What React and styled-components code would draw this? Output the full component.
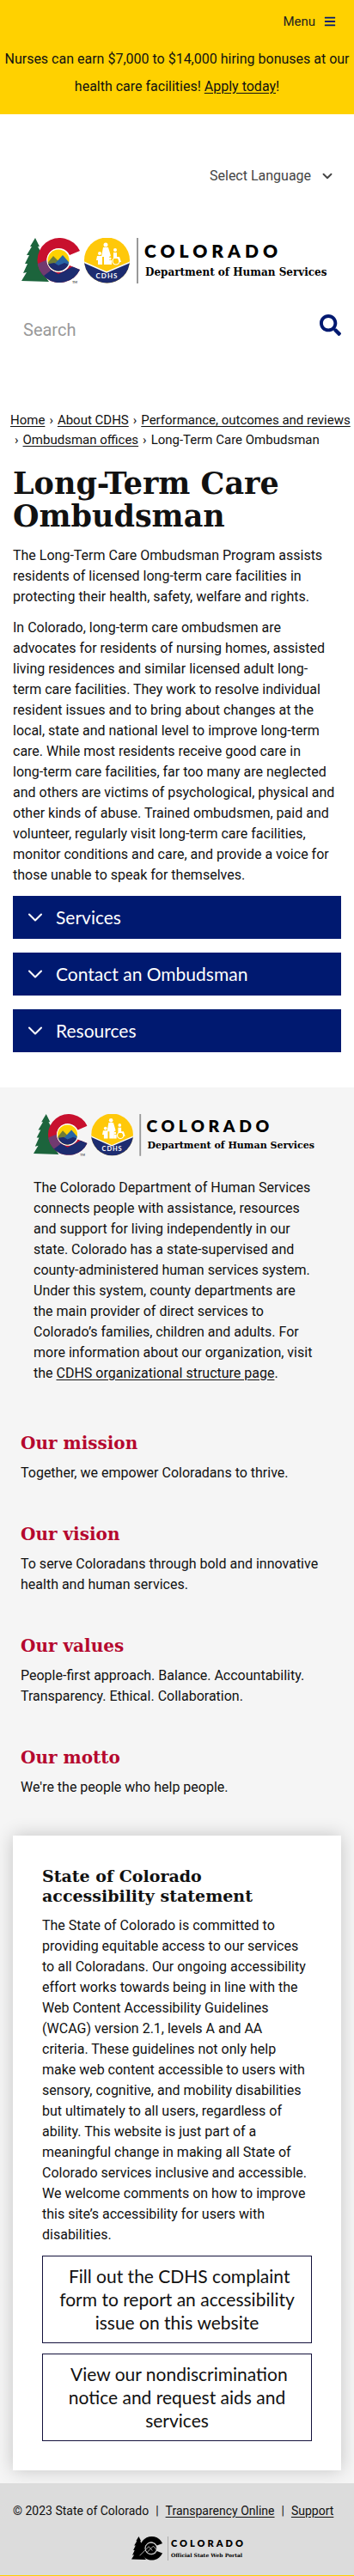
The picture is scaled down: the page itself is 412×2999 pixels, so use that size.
import React from 'react';
import styled, { createGlobalStyle } from 'styled-components';
import { FaBars, FaSearch } from 'react-icons/fa';
import { ChevronDown } from 'lucide-react';

const navy = '#001970';
const slab = '"DejaVu Serif", serif';

const GlobalStyle = createGlobalStyle`
  * { box-sizing: border-box; }
  body {
    margin: 0;
    background: #fff;
    color: #111;
    font: 16px/24px Roboto, "Liberation Sans", sans-serif;
  }
  h1, h2, p { margin: 0; }
  a { color: inherit; text-underline-offset: 2px; }
`;

const TopBar = styled.div`
  display: flex;
  flex-direction: column;
  background: #ffd100;
  padding: 13px 0 16px;
  gap: 16px;
`;

const MenuButton = styled.button`
  display: flex;
  align-items: center;
  gap: 10px;
  align-self: flex-end;
  margin-right: 21px;
  padding: 0;
  border: 0;
  background: none;
  color: ${navy};
  font: 15px/24px Roboto, sans-serif;
  span { color: #222; }
`;

const Notice = styled.p`
  text-align: center;
  line-height: 32px;
`;

const Header = styled.header`
  display: flex;
  flex-direction: column;
  padding: 60px 15px 0;
`;

const LanguagePicker = styled.label`
  display: flex;
  align-items: center;
  align-self: flex-end;
  gap: 9px;
  margin-right: 7px;
  color: #444;
`;

const LanguageSelect = styled.select`
  appearance: none;
  border: 0;
  padding: 0;
  background: none;
  color: inherit;
  font: 16px/24px Roboto, sans-serif;
`;

const HeaderLogo = styled.a`
  display: block;
  margin: 60px 9px 0 10px;
`;

const LogoSvg = styled.svg`
  display: block;
  width: 100%;
  height: auto;
`;

const SearchForm = styled.form`
  display: flex;
  align-items: flex-start;
  margin-top: 36px;
`;

const SearchInput = styled.input`
  flex: 1;
  min-width: 0;
  height: 36px;
  padding: 0 12px;
  border: 0;
  background: none;
  font: 20px/36px Roboto, sans-serif;
  &::placeholder { color: #999; opacity: 1; }
`;

const SearchButton = styled.button`
  display: flex;
  padding: 0;
  border: 0;
  background: none;
  color: ${navy};
`;

const Breadcrumbs = styled.nav`
  display: flex;
  flex-wrap: wrap;
  padding: 76px 0 0 12px;
  font-size: 15px;
  line-height: 23px;
`;

const Crumb = styled.span`
  white-space: nowrap;
  &:not(:first-child)::before { content: "›"; margin: 0 5px; }
`;

const Main = styled.main`
  display: flex;
  flex-direction: column;
  padding: 20px 15px 41px;
`;

const PageTitle = styled.h1`
  font: bold 35px/38px ${slab};
  margin-bottom: 15px;
`;

const Paragraph = styled.p`
  margin-bottom: 12px;
`;

const Accordion = styled.div`
  display: flex;
  flex-direction: column;
  gap: 16px;
`;

const AccordionButton = styled.button`
  display: flex;
  align-items: center;
  gap: 10px;
  height: 50px;
  padding: 0 12px;
  border: 0;
  background: ${navy};
  color: #fff;
  font: 21px/28px Lato, sans-serif;
  text-align: left;
`;

const About = styled.section`
  background: #f5f5f5;
  padding: 31px 15px 15px;
`;

const AboutIntro = styled.div`
  display: flex;
  flex-direction: column;
  gap: 25px;
  padding: 0 24px;
`;

const Statements = styled.div`
  display: flex;
  flex-direction: column;
  gap: 47px;
  padding: 57px 9px 44px;
`;

const Statement = styled.section`
  display: flex;
  flex-direction: column;
  gap: 11px;
`;

const StatementTitle = styled.h2`
  color: #b5082e;
  font: bold 20px/24px ${slab};
`;

const Card = styled.section`
  display: flex;
  flex-direction: column;
  background: #fff;
  padding: 36px 34px 34px;
  box-shadow: 0 0 20px rgba(0, 0, 0, 0.2);
`;

const CardTitle = styled.h2`
  font: bold 19px/23px ${slab};
  margin-bottom: 11px;
`;

const CardLink = styled.a`
  display: block;
  border: 1px solid #14123c;
  padding: 9px 12px 10px;
  margin-top: 12px;
  font: 21px/27px Lato, sans-serif;
  text-align: center;
  text-decoration: none;
`;

const Footer = styled.footer`
  display: flex;
  flex-direction: column;
  align-items: center;
  gap: 18px;
  background: #dcdcdc;
  border-bottom: 1px solid #ffd100;
  padding: 20px 15px 17px;
  font-size: 14px;
`;

const FooterLinks = styled.div`
  display: flex;
  gap: 8px;
  align-self: stretch;
  white-space: nowrap;
`;

const PortalLogo = styled.a`
  display: block;
  width: 136px;
  margin-left: 30px;
`;

const TREE = 'M16 0 L21 10 L19 10 L24 19 L21 19 L27 29 L23 29 L29 40 L24 40 L32 51 L0 50 L6 40 L2 41 L7 30 L4 30 L9 20 L6 20 L12 10 L10 10 Z';
const C_SHAPE = 'M68 15 A26 26 0 1 0 68 37 L56 32 A14 14 0 1 1 56 20 Z';

function DepartmentLogo({ id }) {
  return (
    <LogoSvg viewBox="0 0 363 53" role="img" aria-label="Colorado Department of Human Services">
      <defs>
        <clipPath id={`${id}-seal`}><circle cx="99.500" cy="26" r="26.500" /></clipPath>
        <clipPath id={`${id}-disc`}><circle cx="43" cy="26" r="12.500" /></clipPath>
        <clipPath id={`${id}-c`}><path d={C_SHAPE} /></clipPath>
      </defs>
      <path d={TREE} fill="#1c643c" />
      <g clipPath={`url(#${id}-c)`}>
        <rect x="16" width="54" height="53" fill="#c8102e" />
        <path d="M17 45 L31 35 L43 42 L70 28 V53 H16 Z" fill="#1d2c70" />
        <path d="M16 31 L31 25 L34 38 L22 47 Z" fill="#713a70" />
      </g>
      <circle cx="43" cy="26" r="13.500" fill="#fff" />
      <g clipPath={`url(#${id}-disc)`}>
        <rect x="29" y="12" width="28" height="28" fill="#ffd100" />
        <path d="M28 32 L37 21 L48 32 L44 40 H28 Z" fill="#6f7d35" />
        <path d="M36 33 L48 20 L60 34 L50 40 Z" fill="#2765a5" />
        <path d="M28 31 L38 29 L43 32 L50 29 L58 32 V41 H28 Z" fill="#1d2c70" />
      </g>
      <text x="59" y="53" fontSize="4" fontFamily="Lato, sans-serif">TM</text>
      <g clipPath={`url(#${id}-seal)`}>
        <rect x="73" width="54" height="53" fill="#ffc80a" />
        <path d="M72 28 L99 40 L127 28 V56 H72 Z" fill="#1d2c70" stroke="#fff" strokeWidth="1.500" />
      </g>
      <g fill="#fff">
        <circle cx="98" cy="8" r="2.500" />
        <path d="M95 11 H101 L104 21 L102 22 V31 H96 V22 H93 Z" />
        <circle cx="91" cy="18" r="2" />
        <path d="M88 21 H94 V31 H89 V26 H87 Z" />
        <circle cx="109" cy="14" r="2" />
        <path d="M107 17 H111 V22 H114 L116 28 H114 L112 24 H107 Z" />
        <circle cx="103" cy="24" r="1.500" />
        <path d="M102 26 H105 V31 H102 Z" />
      </g>
      <circle cx="110" cy="27" r="4" fill="none" stroke="#fff" strokeWidth="1.200" />
      <text x="99.500" y="47" fontSize="8" fontWeight="700" fontFamily="Lato, sans-serif" letterSpacing="1" textAnchor="middle" fill="#fff">CDHS</text>
      <rect x="134" width="2" height="53" fill="#999" />
      <text x="143" y="23" fontSize="21" fontWeight="800" fontFamily="Lato, sans-serif" letterSpacing="5">COLORADO</text>
      <text x="144" y="44" fontSize="12" fontWeight="700" fontFamily="DejaVu Serif, serif">Department of Human Services</text>
    </LogoSvg>
  );
}

function StatePortalLogo() {
  return (
    <LogoSvg viewBox="0 0 136 28" role="img" aria-label="Colorado Official State Web Portal">
      <g transform="scale(0.530)">
        <path d={TREE} />
        <path d={C_SHAPE} />
        <circle cx="43" cy="26" r="12.500" stroke="#dcdcdc" strokeWidth="1.500" />
        <path d="M18 42 L38 22 L46 31 M33 36 L48 21 L58 32" fill="none" stroke="#dcdcdc" strokeWidth="1.500" />
      </g>
      <rect x="42" width="1" height="28" fill="#aaa" />
      <text x="46" y="12" fontSize="11" fontWeight="800" fontFamily="Lato, sans-serif" letterSpacing="3">COLORADO</text>
      <text x="46" y="24" fontSize="6" fontWeight="700" fontFamily="DejaVu Serif, serif">Official State Web Portal</text>
    </LogoSvg>
  );
}

const statements = [
  ['Our mission', 'Together, we empower Coloradans to thrive.'],
  ['Our vision', 'To serve Coloradans through bold and innovative health and human services.'],
  ['Our values', 'People-first approach. Balance. Accountability. Transparency. Ethical. Collaboration.'],
  ['Our motto', "We're the people who help people."],
];

export default function App() {
  return (
    <>
      <GlobalStyle />
      <TopBar>
        <MenuButton type="button"><span>Menu</span><FaBars size={14} /></MenuButton>
        <Notice>
          Nurses can earn $7,000 to $14,000 hiring bonuses at our health care facilities! <a href="#apply">Apply today</a>!
        </Notice>
      </TopBar>
      <Header>
        <LanguagePicker>
          <LanguageSelect aria-label="Select Language"><option>Select Language</option></LanguageSelect>
          <ChevronDown size={18} strokeWidth={2.5} />
        </LanguagePicker>
        <HeaderLogo href="#home"><DepartmentLogo id="header" /></HeaderLogo>
        <SearchForm>
          <SearchInput type="search" placeholder="Search" aria-label="Search" />
          <SearchButton type="submit" aria-label="Submit search"><FaSearch size={25} /></SearchButton>
        </SearchForm>
      </Header>
      <Breadcrumbs aria-label="Breadcrumb">
        <Crumb><a href="#home">Home</a></Crumb>
        <Crumb><a href="#about">About CDHS</a></Crumb>
        <Crumb><a href="#performance">Performance, outcomes and reviews</a></Crumb>
        <Crumb><a href="#offices">Ombudsman offices</a></Crumb>
        <Crumb>Long-Term Care Ombudsman</Crumb>
      </Breadcrumbs>
      <Main>
        <PageTitle>Long-Term Care Ombudsman</PageTitle>
        <Paragraph>
          The Long-Term Care Ombudsman Program assists<br />
          residents of licensed long-term care facilities in<br />
          protecting their health, safety, welfare and rights.
        </Paragraph>
        <Paragraph>
          In Colorado, long-term care ombudsmen are<br />
          advocates for residents of nursing homes, assisted<br />
          living residences and similar licensed adult long-<br />
          term care facilities. They work to resolve individual<br />
          resident issues and to bring about changes at the<br />
          local, state and national level to improve long-term<br />
          care. While most residents receive good care in<br />
          long-term care facilities, far too many are neglected<br />
          and others are victims of psychological, physical and<br />
          other kinds of abuse. Trained ombudsmen, paid and<br />
          volunteer, regularly visit long-term care facilities,<br />
          monitor conditions and care, and provide a voice for<br />
          those unable to speak for themselves.
        </Paragraph>
        <Accordion>
          {['Services', 'Contact an Ombudsman', 'Resources'].map((label) => (
            <AccordionButton key={label} type="button" aria-expanded="false">
              <ChevronDown size={28} strokeWidth={1.75} />
              {label}
            </AccordionButton>
          ))}
        </Accordion>
      </Main>
      <About>
        <AboutIntro>
          <DepartmentLogo id="about" />
          <p>
            The Colorado Department of Human Services<br />
            connects people with assistance, resources<br />
            and support for living independently in our<br />
            state. Colorado has a state-supervised and<br />
            county-administered human services system.<br />
            Under this system, county departments are<br />
            the main provider of direct services to<br />
            Colorado’s families, children and adults. For<br />
            more information about our organization, visit<br />
            the <a href="#structure">CDHS organizational structure page</a>.
          </p>
        </AboutIntro>
        <Statements>
          {statements.map(([title, body]) => (
            <Statement key={title}>
              <StatementTitle>{title}</StatementTitle>
              <p>{body}</p>
            </Statement>
          ))}
        </Statements>
        <Card>
          <CardTitle>State of Colorado accessibility statement</CardTitle>
          <p>
            The State of Colorado is committed to<br />
            providing equitable access to our services<br />
            to all Coloradans. Our ongoing accessibility<br />
            effort works towards being in line with the<br />
            Web Content Accessibility Guidelines<br />
            (WCAG) version 2.1, levels A and AA<br />
            criteria. These guidelines not only help<br />
            make web content accessible to users with<br />
            sensory, cognitive, and mobility disabilities<br />
            but ultimately to all users, regardless of<br />
            ability. This website is just part of a<br />
            meaningful change in making all State of<br />
            Colorado services inclusive and accessible.<br />
            We welcome comments on how to improve<br />
            this site’s accessibility for users with<br />
            disabilities.
          </p>
          <CardLink href="#complaint">&nbsp;Fill out the CDHS complaint form to report an accessibility issue on this website</CardLink>
          <CardLink href="#notice">&nbsp;View our nondiscrimination notice and request aids and services</CardLink>
        </Card>
      </About>
      <Footer>
        <FooterLinks>
          <span>© 2023 State of Colorado</span>
          <span>|</span>
          <a href="#transparency">Transparency Online</a>
          <span>|</span>
          <a href="#support">Support</a>
        </FooterLinks>
        <PortalLogo href="#portal"><StatePortalLogo /></PortalLogo>
      </Footer>
    </>
  );
}
